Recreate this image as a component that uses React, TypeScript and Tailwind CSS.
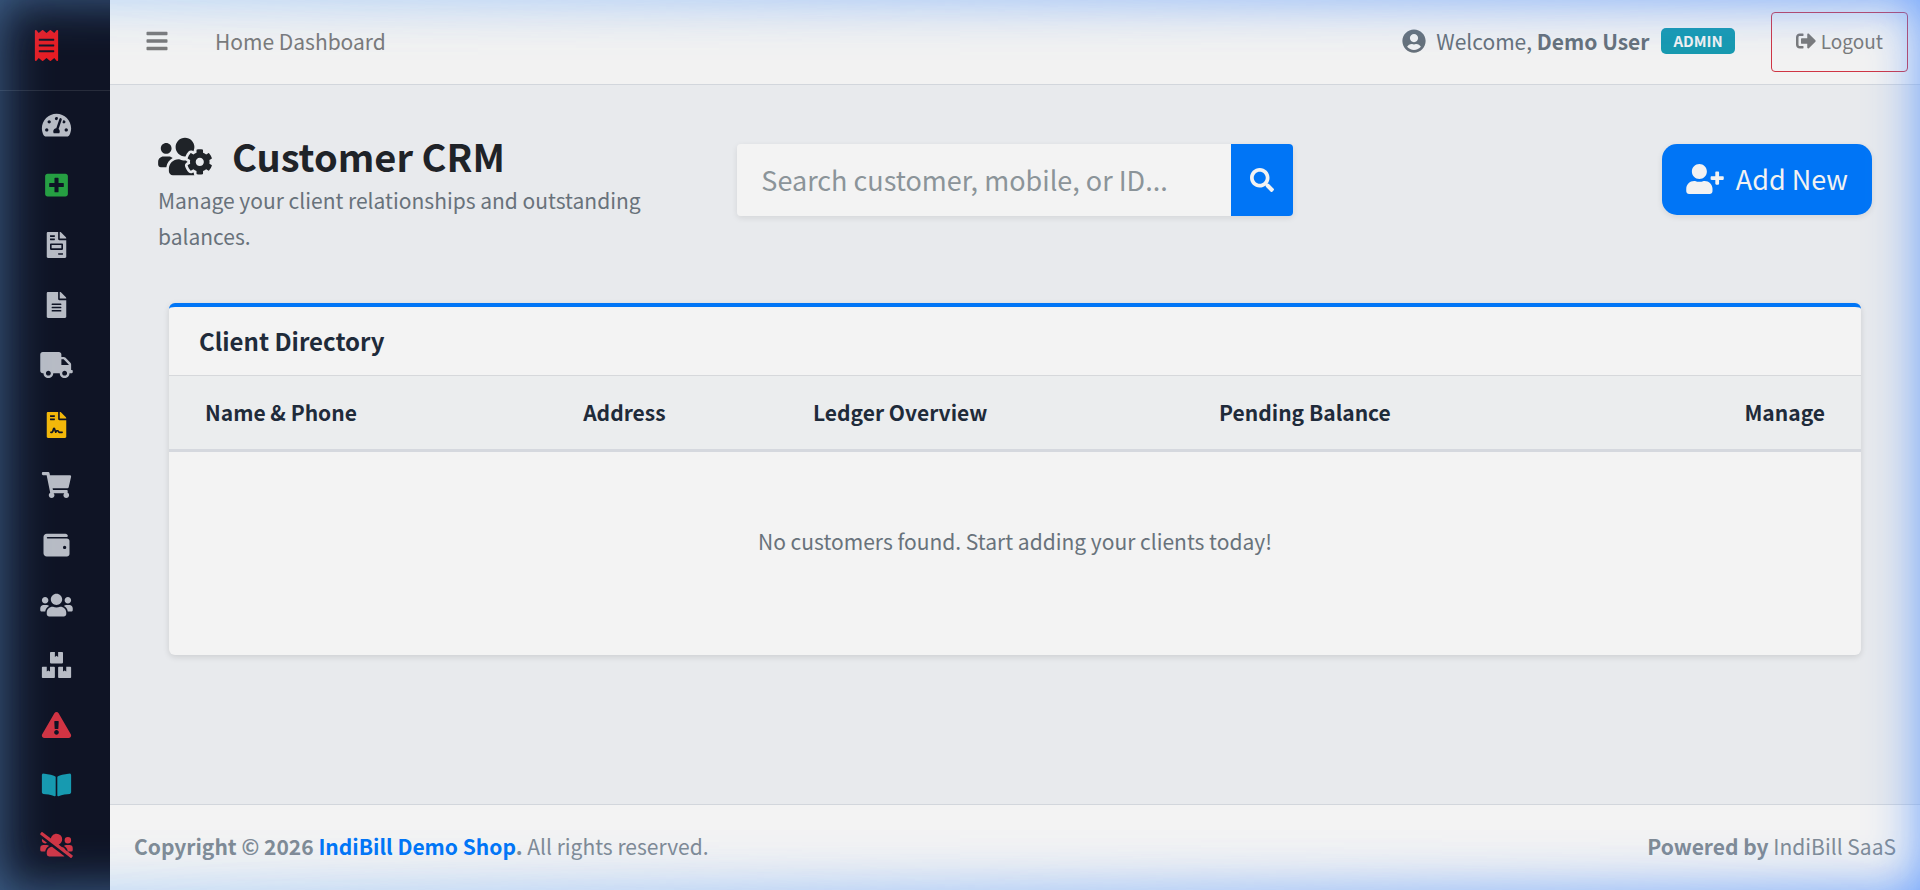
import React from 'react';
import type { IconType } from 'react-icons';
import {
  FaBars,
  FaBookOpen,
  FaBoxes,
  FaExclamationTriangle,
  FaFileAlt,
  FaFileContract,
  FaFileInvoice,
  FaPlusSquare,
  FaReceipt,
  FaSearch,
  FaShoppingCart,
  FaSignOutAlt,
  FaTachometerAlt,
  FaTruck,
  FaUserCircle,
  FaUserPlus,
  FaUsers,
  FaUsersCog,
  FaUsersSlash,
  FaWallet,
} from 'react-icons/fa';

type NavItem = { label: string; icon: IconType; color: string };

const navItems: NavItem[] = [
  { label: 'Dashboard', icon: FaTachometerAlt, color: 'text-[#b8bcc5]' },
  { label: 'New Bill', icon: FaPlusSquare, color: 'text-[#269f42]' },
  { label: 'Invoices', icon: FaFileInvoice, color: 'text-[#b8bcc5]' },
  { label: 'Quotations', icon: FaFileAlt, color: 'text-[#b8bcc5]' },
  { label: 'Challans', icon: FaTruck, color: 'text-[#b8bcc5]' },
  { label: 'Contracts', icon: FaFileContract, color: 'text-[#f3b80a]' },
  { label: 'Purchases', icon: FaShoppingCart, color: 'text-[#b8bcc5]' },
  { label: 'Expenses', icon: FaWallet, color: 'text-[#b8bcc5]' },
  { label: 'Customers', icon: FaUsers, color: 'text-[#b8bcc5]' },
  { label: 'Inventory', icon: FaBoxes, color: 'text-[#b8bcc5]' },
  { label: 'Low Stock', icon: FaExclamationTriangle, color: 'text-[#d13443]' },
  { label: 'Ledger', icon: FaBookOpen, color: 'text-[#179ab0]' },
  { label: 'Defaulters', icon: FaUsersSlash, color: 'text-[#d13443]' },
];

function Sidebar() {
  return (
    <aside className="w-[110px] shrink-0 overflow-hidden bg-[#0f1425]">
      <a
        href="#"
        aria-label="IndiBill"
        className="flex h-[91px] items-center border-b border-[#272c3b] pl-[31px] text-[#e81c22]"
      >
        <FaReceipt className="size-[31px]" />
      </a>
      <nav className="flex flex-col pt-1">
        {navItems.map(({ label, icon: Icon, color }) => (
          <a
            key={label}
            href="#"
            aria-label={label}
            className={`flex h-[60px] items-center justify-center pl-0.5 ${color}`}
          >
            <Icon className="h-[26px] w-[33px]" />
          </a>
        ))}
      </nav>
    </aside>
  );
}

function Navbar() {
  return (
    <header className="flex h-[85px] shrink-0 items-center justify-between border-b border-[#d2d6dc] bg-[#f2f2f2] pr-3 pl-[35px] text-[#7a7a7a]">
      <div className="flex items-center pb-0.5">
        <button type="button" aria-label="Toggle menu">
          <FaBars className="size-6" />
        </button>
        <a href="#" className="ml-[46px]">
          Home Dashboard
        </a>
      </div>
      <div className="flex items-center">
        <div className="flex items-center pb-0.5 text-[#67717a]">
          <FaUserCircle className="mr-[10px] size-6" />
          <span>
            Welcome, <strong>Demo User</strong>
          </span>
          <span className="ml-3 rounded-[5px] bg-[#179ab0] px-3 text-[15px] leading-[26px] font-bold text-[#f2f2f2]">
            ADMIN
          </span>
        </div>
        <button
          type="button"
          className="ml-9 flex h-[60px] items-center gap-[5px] rounded-[4px] border border-[#cf3544] px-6 pb-0.5 text-[19px]"
        >
          <FaSignOutAlt className="size-5" />
          Logout
        </button>
      </div>
    </header>
  );
}

function PageHeader() {
  return (
    <div className="grid grid-cols-12 px-3">
      <div className="col-span-4 px-3">
        <h1 className="flex items-center text-[38px] leading-10 font-bold text-[#1f2328]">
          <FaUsersCog className="mr-5 h-[43px] w-[54px]" />
          <span className="pb-0.5">Customer CRM</span>
        </h1>
        <p className="mt-1 leading-9 text-[#68727b]">
          Manage your client relationships and outstanding balances.
        </p>
      </div>
      <form className="col-span-4 mx-3 mt-[9px] flex h-[72px] rounded shadow-[0_2px_6px_rgba(0,0,0,0.09)]">
        <input
          type="search"
          aria-label="Search customers"
          placeholder="Search customer, mobile, or ID..."
          className="min-w-0 flex-1 rounded-l bg-[#f3f3f3] px-6 text-[27px] text-[#495057] outline-none placeholder:text-[#8b9499]"
        />
        <button
          type="button"
          aria-label="Search"
          className="flex w-[62px] items-center justify-center rounded-r bg-[#0075f6] text-[#f2f2f2]"
        >
          <FaSearch className="size-6" />
        </button>
      </form>
      <div className="col-span-4 mt-[9px] flex items-start justify-end px-3">
        <button
          type="button"
          className="flex h-[71px] items-center gap-3 rounded-[15px] bg-[#0075f6] px-6 pb-0.5 text-[27px] text-[#f2f2f2] shadow-[0_2px_6px_rgba(0,0,0,0.09)]"
        >
          <FaUserPlus className="h-[30px] w-[38px]" />
          Add New
        </button>
      </div>
    </div>
  );
}

function ClientDirectory() {
  return (
    <section className="mx-[35px] overflow-hidden rounded-md border-t-4 border-[#0075f6] bg-[#f3f3f3] shadow-[0_2px_6px_rgba(0,0,0,0.12)]">
      <h2 className="border-b border-[#d6d8db] px-[30px] py-4 text-2xl leading-9 font-bold text-[#1f2b3a]">
        Client Directory
      </h2>
      <table className="w-full table-fixed text-left">
        <thead className="border-b-[3px] border-[#d5d8de] bg-[#ebedee] text-[#1f2b3a]">
          <tr className="h-[74px]">
            <th className="w-[23%] pl-9">Name &amp; Phone</th>
            <th className="w-[14%] pl-[25px]">Address</th>
            <th className="w-[24%] pl-[18px]">Ledger Overview</th>
            <th className="w-[26%] pl-[18px]">Pending Balance</th>
            <th className="pr-9 text-right">Manage</th>
          </tr>
        </thead>
        <tbody>
          <tr>
            <td colSpan={5} className="h-[205px] pb-6 text-center text-[#68727b]">
              No customers found. Start adding your clients today!
            </td>
          </tr>
        </tbody>
      </table>
    </section>
  );
}

function Footer() {
  return (
    <footer className="flex h-[86px] shrink-0 items-center justify-between border-t border-[#d2d6dc] bg-[#f3f3f3] px-6 pb-[3px] text-[#808b95]">
      <p>
        <strong>
          Copyright © 2026{' '}
          <a href="#" className="text-[#0075f6]">
            IndiBill Demo Shop
          </a>
          .
        </strong>{' '}
        All rights reserved.
      </p>
      <p>
        <strong>Powered by</strong> IndiBill SaaS
      </p>
    </footer>
  );
}

// Soft glow around the window edge, paler on the left and bluer on the right
function EdgeGlow() {
  return (
    <div className="pointer-events-none absolute inset-0">
      <div className="absolute inset-0 shadow-[inset_0_0_50px_rgba(118,185,255,0.5)] [mask-image:linear-gradient(to_right,black,transparent)]" />
      <div className="absolute inset-0 shadow-[inset_0_0_50px_rgba(80,145,255,0.85)] [mask-image:linear-gradient(to_left,black,transparent)]" />
    </div>
  );
}

export default function App() {
  return (
    <div className="relative flex h-screen overflow-hidden bg-[#e8eaed] font-['Noto_Sans_CJK_SC',sans-serif] text-[21px] leading-9">
      <Sidebar />
      <div className="flex min-w-0 flex-1 flex-col">
        <Navbar />
        <main className="flex flex-1 flex-col gap-[49px] px-6 pt-[50px]">
          <PageHeader />
          <ClientDirectory />
        </main>
        <Footer />
      </div>
      <EdgeGlow />
    </div>
  );
}
